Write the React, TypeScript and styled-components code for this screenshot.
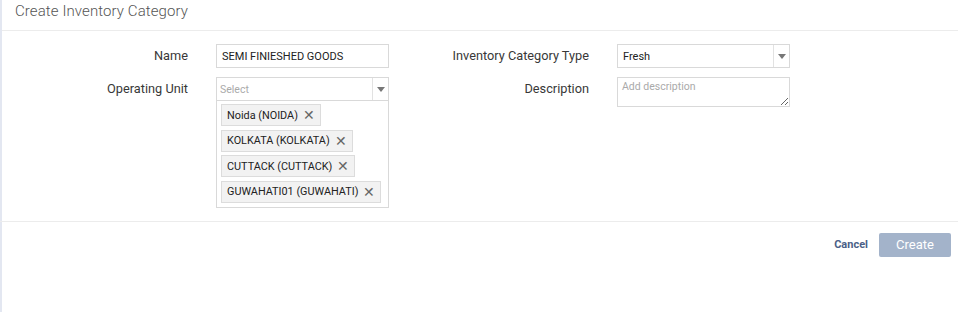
import React from "react"
import styled, { createGlobalStyle } from "styled-components"

const GlobalStyle = createGlobalStyle`
  body {
    margin: 0;
    background: #fff;
    font-family: Roboto, "Liberation Sans", Arial, sans-serif;
  }
`

const Modal = styled.div`
  width: 958px;
  height: 312px;
  box-sizing: border-box;
  border-left: 2px solid #e3e7f1;
  background: #fff;
`

const Header = styled.div`
  height: 30px;
  border-bottom: 1px solid #ececec;
  padding-left: 13px;
  display: flex;
  align-items: center;
  box-sizing: content-box;
`

const Title = styled.h2`
  margin: 0 0 8px;
  font-size: 15px;
  font-weight: 300;
  color: #555;
  letter-spacing: 0.1px;
`

const Body = styled.div`
  padding: 13px 0 13px;
  border-bottom: 1px solid #ececec;
  display: grid;
  grid-template-columns: 389px 389px;
  column-gap: 12px;
  margin-left: -2px;
`

const Column = styled.div`
  display: flex;
  flex-direction: column;
  gap: 9px;
`

const Field = styled.div`
  display: grid;
  grid-template-columns: 188px 173px;
  column-gap: 28px;
  align-items: start;
`

const Label = styled.label`
  font-size: 12.75px;
  color: #383838;
  text-align: right;
  line-height: 24px;
  white-space: nowrap;
`

const Box = styled.div<{ $height?: number }>`
  box-sizing: border-box;
  height: ${(p) => p.$height ?? 24}px;
  border: 1px solid #d9d9d9;
  background: #fff;
  display: flex;
  align-items: center;
  font-size: 11px;
  color: #222;
`

const Value = styled.span<{ $placeholder?: boolean }>`
  flex: 1;
  padding-left: ${(p) => (p.$placeholder ? 3 : 5)}px;
  color: ${(p) => (p.$placeholder ? "#aaa" : "#222")};
  font-size: ${(p) => (p.$placeholder ? 10.5 : 11)}px;
  white-space: nowrap;
`

const Arrow = styled.span`
  width: 15px;
  align-self: stretch;
  border-left: 1px solid #e2e2e2;
  display: flex;
  align-items: center;
  justify-content: center;
  &::after {
    content: "";
    border-left: 4px solid transparent;
    border-right: 4px solid transparent;
    border-top: 5px solid #777;
  }
`

const MultiWrap = styled.div`
  display: flex;
  flex-direction: column;
`

const TagList = styled.div`
  box-sizing: border-box;
  border: 1px solid #d9d9d9;
  border-top: none;
  padding: 3px 4px 4px;
  display: flex;
  flex-direction: column;
  align-items: flex-start;
  gap: 3.67px;
`

const Tag = styled.span`
  box-sizing: border-box;
  height: 22px;
  display: inline-flex;
  align-items: center;
  gap: 5px;
  padding: 0 5px 0 5px;
  background: #f2f2f2;
  border: 1px solid #dcdcdc;
  font-size: 10.85px;
  color: #222;
  white-space: nowrap;
`

const Remove = styled.span`
  font-size: 14px;
  color: #666;
  line-height: 1;
`

const TextArea = styled.textarea`
  box-sizing: border-box;
  width: 173px;
  height: 30px;
  border: 1px solid #d9d9d9;
  padding: 2px 4px;
  font-family: Roboto, "Liberation Sans", Arial, sans-serif;
  font-size: 10.5px;
  color: #222;
  margin: 0;
  &::placeholder {
    color: #aaa;
  }
`

const Footer = styled.div`
  display: flex;
  justify-content: flex-end;
  align-items: center;
  gap: 11px;
  padding: 11px 7px 0 0;
`

const CancelButton = styled.button`
  background: none;
  border: none;
  padding: 0;
  font-family: inherit;
  font-size: 11px;
  font-weight: 700;
  color: #4b5f87;
`

const CreateButton = styled.button`
  width: 72px;
  height: 24px;
  border: none;
  border-radius: 2px;
  background: #a3b3ca;
  color: #fff;
  font-family: inherit;
  font-size: 13px;
`

const units = ["Noida (NOIDA)", "KOLKATA (KOLKATA)", "CUTTACK (CUTTACK)", "GUWAHATI01 (GUWAHATI)"]

export default function App() {
  return (
    <Modal>
      <GlobalStyle />
      <Header>
        <Title>Create Inventory Category</Title>
      </Header>
      <Body>
        <Column>
          <Field>
            <Label>Name</Label>
            <Box>
              <Value>SEMI FINIESHED GOODS</Value>
            </Box>
          </Field>
          <Field>
            <Label>Operating Unit</Label>
            <MultiWrap>
              <Box>
                <Value $placeholder>Select</Value>
                <Arrow />
              </Box>
              <TagList>
                {units.map((u) => (
                  <Tag key={u}>
                    {u}
                    <Remove>✕</Remove>
                  </Tag>
                ))}
              </TagList>
            </MultiWrap>
          </Field>
        </Column>
        <Column>
          <Field>
            <Label>Inventory Category Type</Label>
            <Box>
              <Value>Fresh</Value>
              <Arrow />
            </Box>
          </Field>
          <Field>
            <Label>Description</Label>
            <TextArea placeholder="Add description" />
          </Field>
        </Column>
      </Body>
      <Footer>
        <CancelButton>Cancel</CancelButton>
        <CreateButton>Create</CreateButton>
      </Footer>
    </Modal>
  )
}
